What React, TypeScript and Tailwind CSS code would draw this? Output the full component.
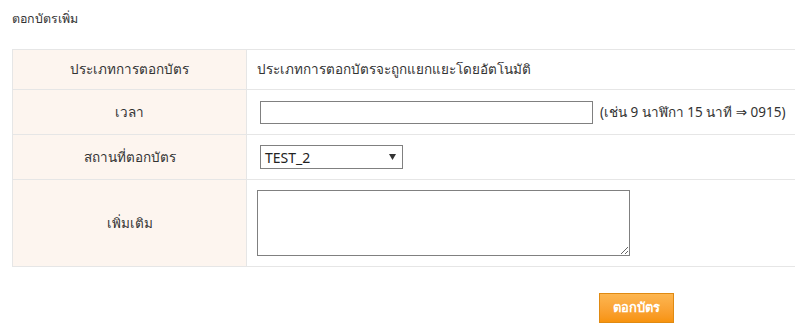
import React from "react";

const labelCell =
  "w-[234px] bg-[#fdf5ef] border border-[#e6e6e6] text-center align-middle";
const valueCell = "border border-[#e6e6e6] align-middle pl-[10px]";

export default function App() {
  return (
    <div
      className="w-[795px] h-[335px] overflow-hidden bg-white text-[#333] text-[13.5px]"
      style={{ fontFamily: "Tahoma, 'Noto Sans', 'DejaVu Sans', sans-serif" }}
    >
      <div className="pl-[12px] pt-[10px] h-[49px] text-[12.4px]">ตอกบัตรเพิ่ม</div>
      <div className="pl-[12px]">
        <table className="w-[820px] border-collapse">
          <tbody>
            <tr className="h-[40px]">
              <td className={labelCell}>ประเภทการตอกบัตร</td>
              <td className={valueCell}>ประเภทการตอกบัตรจะถูกแยกแยะโดยอัตโนมัติ</td>
            </tr>
            <tr className="h-[45px]">
              <td className={labelCell}>เวลา</td>
              <td className={valueCell}>
                <div className="flex items-center gap-[7px] pl-[3px]">
                  <input
                    type="text"
                    className="w-[333px] h-[23px] border border-[#808080] bg-white outline-none"
                  />
                  <span className="whitespace-nowrap">(เช่น 9 นาฬิกา 15 นาที ⇒ 0915)</span>
                </div>
              </td>
            </tr>
            <tr className="h-[45px]">
              <td className={labelCell}>สถานที่ตอกบัตร</td>
              <td className={valueCell}>
                <div className="pl-[3px]">
                  <div className="w-[143px] h-[24px] border border-[#808080] bg-white flex items-center justify-between pl-[4px] pr-[6px]">
                    <span className="text-[#222] text-[14px]">TEST_2</span>
                    <svg width="7" height="6" viewBox="0 0 7 6">
                      <path d="M0 0H7L3.5 6Z" fill="#333" />
                    </svg>
                  </div>
                </div>
              </td>
            </tr>
            <tr className="h-[87px]">
              <td className={labelCell}>เพิ่มเติม</td>
              <td className={valueCell}>
                <textarea className="block w-[373px] h-[66px] border border-[#808080] bg-white outline-none resize" />
              </td>
            </tr>
          </tbody>
        </table>
      </div>
      <div className="pl-[599px] pt-[26px]">
        <button className="w-[75px] h-[30px] border border-[#e08a12] bg-gradient-to-b from-[#fdb650] to-[#f7930c] text-white font-bold text-[13px]">
          ตอกบัตร
        </button>
      </div>
    </div>
  );
}
